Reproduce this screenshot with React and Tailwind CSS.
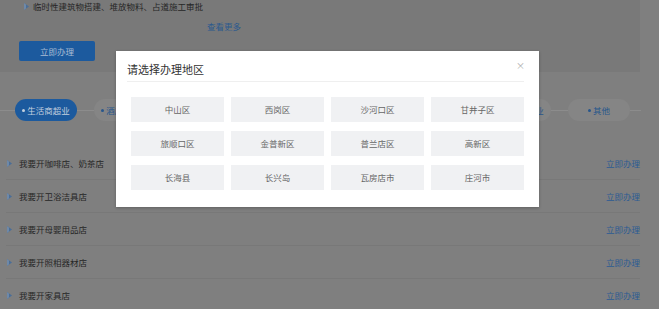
import React from "react";

const pills = [
  "生活商超业",
  "酒店餐饮业",
  "美容美发业",
  "文化娱乐业",
  "教育培训业",
  "医疗健康业",
  "交通运输业",
  "其他",
];

const shops = [
  "我要开咖啡店、奶茶店",
  "我要开卫浴洁具店",
  "我要开母婴用品店",
  "我要开照相器材店",
  "我要开家具店",
];

const areas = [
  "中山区",
  "西岗区",
  "沙河口区",
  "甘井子区",
  "旅顺口区",
  "金普新区",
  "普兰店区",
  "高新区",
  "长海县",
  "长兴岛",
  "瓦房店市",
  "庄河市",
];

const Arrow = ({ className }) => (
  <svg width="5" height="7" viewBox="0 0 5 7" className={className}>
    <path d="M0 0 L5 3.5 L0 7 Z" fill="#4a6e98" />
    <path d="M0 0 L2 1.4 L2 5.6 L0 7 Z" fill="#6f89a8" />
  </svg>
);

export default function App() {
  return (
    <div className="relative w-[659px] h-[309px] overflow-hidden bg-[#7f7f7f] font-['Noto_Sans_CJK_SC','Noto_Sans',sans-serif] text-[8.5px] leading-none">
      {/* 上方卡片（遮罩下） */}
      <div className="w-[640px] h-[72px] bg-[#797979]">
        <div className="h-[13px] flex items-center pl-[24px] gap-[4px] text-[#262626]">
          <Arrow />
          <span>临时性建筑物搭建、堆放物料、占道施工审批</span>
        </div>
        <div className="mt-[7px] h-[13px] flex items-center pl-[207px] text-[#2c5a8e]">查看更多</div>
        <button className="mt-[8px] ml-[19px] w-[76px] h-[20px] rounded-[2px] bg-[#1c5a9e] text-[#a9bdd4] text-[8.5px]">
          立即办理
        </button>
      </div>

      {/* 行业时间轴 */}
      <div className="mt-[27px] w-[641px] flex items-center">
        <div className="w-[15px] h-px bg-[#8c8c8c]" />
        {pills.map((p, i) => (
          <React.Fragment key={p}>
            {i > 0 && <div className="w-[17px] h-px bg-[#8c8c8c]" />}
            <div
              className={`w-[62px] h-[22px] shrink-0 rounded-full flex items-center justify-center gap-[2px] ${
                i === 0 ? "bg-[#1c5a9e] text-[#c3d0de]" : "bg-[#858585] text-[#27568c]"
              }`}
            >
              <span className={`w-[3px] h-[3px] rounded-full ${i === 0 ? "bg-[#c3d0de]" : "bg-[#27568c]"}`} />
              <span>{p}</span>
            </div>
          </React.Fragment>
        ))}
        <div className="flex-1 h-px bg-[#8c8c8c]" />
      </div>

      {/* 列表 */}
      <div className="mt-[26px] ml-[6px] w-[634px]">
        {shops.map((s) => (
          <div key={s} className="h-[33px] flex items-center border-b border-[#787878]">
            <Arrow className="ml-[1px]" />
            <span className="ml-[7px] text-[#262626]">{s}</span>
            <span className="ml-auto text-[#2c5b93]">立即办理</span>
          </div>
        ))}
      </div>

      {/* 弹窗 */}
      <div className="absolute left-[116px] top-[51px] w-[423px] h-[156px] bg-white shadow-[0_1px_3px_rgba(0,0,0,0.25)]">
        <div className="relative ml-[11px] mr-[15px] h-[31px] border-b border-[#efefef] flex items-end pb-[5px]">
          <span className="text-[11px] leading-[14px] text-[#333]">请选择办理地区</span>
          <span className="absolute right-[-1px] top-[10px] text-[9px] text-[#aaa] leading-none">×</span>
        </div>
        <div className="mt-[15px] mx-[15px] grid grid-cols-4 gap-x-[7px] gap-y-[9px]">
          {areas.map((a) => (
            <div key={a} className="h-[25px] bg-[#f0f1f3] flex items-center justify-center text-[#666]">
              {a}
            </div>
          ))}
        </div>
      </div>
    </div>
  );
}
